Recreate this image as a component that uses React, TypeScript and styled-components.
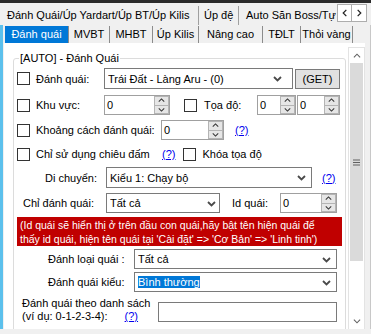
import React from 'react'
import styled, { createGlobalStyle, css } from 'styled-components'

const GlobalStyle = createGlobalStyle`
  html, body {
    margin: 0;
    padding: 0;
    background: #f0f0f0;
  }
  body {
    font-family: 'Liberation Sans', Arial, sans-serif;
    font-size: 11px;
    color: #000;
  }
`

const Window = styled.div`
  width: 371px;
  height: 334px;
  overflow: hidden;
  display: flex;
  flex-direction: column;
  background: #f0f0f0;
`

const TitleStrip = styled.div`
  height: 3px;
  flex: none;
  background: #2b2b2b;
`

const OuterBar = styled.div`
  height: 22px;
  flex: none;
  display: flex;
`

const OuterTabs = styled.div`
  flex: 1;
  display: flex;
  overflow: hidden;
  padding-left: 4px;
`

const OuterTab = styled.div<{ $w?: number; $pl: number }>`
  flex: none;
  width: ${p => (p.$w ? `${p.$w}px` : 'auto')};
  box-sizing: border-box;
  padding-left: ${p => p.$pl}px;
  padding-right: 6px;
  margin-top: 3px;
  line-height: 19px;
  white-space: nowrap;
  border-right: 1px solid #a0a0a0;
`

const ScrollArrows = styled.div`
  flex: none;
  display: flex;
  padding: 1px 4px 0 0;
`

const ArrowBox = styled.div`
  width: 15px;
  height: 18px;
  box-sizing: border-box;
  border: 1px solid #adadad;
  background: #fff;
  display: flex;
  align-items: center;
  justify-content: center;
  & + & {
    border-left: none;
  }
`

const Body = styled.div`
  flex: 1;
  display: flex;
  min-height: 0;
`

const BlueEdge = styled.div`
  width: 3px;
  flex: none;
  background: #5cc0ec;
`

const TabControl = styled.div`
  flex: 1;
  display: flex;
  flex-direction: column;
  border-left: 1px solid #f0f0f0;
`

const InnerTabs = styled.div`
  height: 18px;
  flex: none;
  display: flex;
  padding: 1px 0 0 1px;
  box-sizing: border-box;
`

const InnerTab = styled.div<{ $w: number; $active?: boolean }>`
  width: ${p => p.$w}px;
  flex: none;
  box-sizing: border-box;
  border-right: 1px solid #8c8c8c;
  text-align: center;
  line-height: 16px;
  white-space: nowrap;
  ${p =>
    p.$active &&
    css`
      background: #0078d7;
      color: #fff;
    `}
`

const Page = styled.div`
  flex: 1;
  display: flex;
  background: #fff;
  min-height: 0;
`

const PageContent = styled.div`
  flex: 1;
  overflow: hidden;
  padding: 15px 2px 0 9px;
`

const ScrollBar = styled.div`
  width: 17px;
  flex: none;
  margin-top: 4px;
  display: flex;
  flex-direction: column;
  box-sizing: border-box;
  border: 1px solid #e3e3e3;
  border-bottom: none;
  background: #fff;
`

const ScrollBtn = styled.div<{ $h: number }>`
  height: ${p => p.$h}px;
  flex: none;
  display: flex;
  align-items: center;
  justify-content: center;
`

const Thumb = styled.div`
  height: 198px;
  flex: none;
  margin: 0 1px;
  background: #dadada;
  display: flex;
  align-items: center;
  justify-content: center;
`

const Track = styled.div`
  flex: 1;
`

const RightEdge = styled.div`
  width: 6px;
  flex: none;
  box-sizing: border-box;
  border-right: 1px solid #c8c8c8;
`

const BottomStrip = styled.div`
  height: 5px;
  flex: none;
`

const Group = styled.div`
  position: relative;
  border: 1px solid #dcdcdc;
  border-radius: 3px;
  padding: 9px 0 40px 3px;
`

const Legend = styled.span`
  position: absolute;
  top: -8px;
  left: 5px;
  padding: 0 1px;
  background: #fff;
  line-height: 14px;
`

const Row = styled.div<{ $h: number; $mt?: number; $top?: boolean }>`
  display: flex;
  align-items: ${p => (p.$top ? 'flex-start' : 'center')};
  height: ${p => p.$h}px;
  margin-top: ${p => p.$mt ?? 0}px;
`

const Check = styled.span<{ $ml?: number }>`
  width: 13px;
  height: 13px;
  flex: none;
  box-sizing: border-box;
  border: 1px solid #333;
  background: #fff;
  margin-left: ${p => p.$ml ?? 0}px;
`

const Label = styled.span<{ $w?: number; $ml?: number }>`
  flex: none;
  white-space: nowrap;
  width: ${p => (p.$w ? `${p.$w}px` : 'auto')};
  margin-left: ${p => p.$ml ?? 0}px;
`

const Link = styled.span<{ $ml?: number }>`
  flex: none;
  color: #0000ee;
  text-decoration: underline;
  margin-left: ${p => p.$ml ?? 0}px;
`

const Combo = styled.div<{ $w: number; $ml?: number; $ar?: number }>`
  width: ${p => p.$w}px;
  height: 100%;
  flex: none;
  box-sizing: border-box;
  margin-left: ${p => p.$ml ?? 0}px;
  border: 1px solid #7a7a7a;
  background: #fff;
  display: flex;
  align-items: center;
  padding: 0 ${p => p.$ar ?? 5}px 0 3px;
`

const ComboText = styled.span`
  flex: 1;
  white-space: nowrap;
  overflow: hidden;
`

const Selected = styled.span`
  background: #0078d7;
  color: #fff;
`

const Numeric = styled.div<{ $w: number; $ml?: number }>`
  width: ${p => p.$w}px;
  height: 100%;
  flex: none;
  box-sizing: border-box;
  margin-left: ${p => p.$ml ?? 0}px;
  border: 1px solid #a0a0a0;
  background: #fff;
  display: flex;
`

const NumText = styled.span`
  flex: 1;
  display: flex;
  align-items: center;
  padding-left: 2px;
`

const Spinner = styled.div`
  width: 15px;
  flex: none;
  display: flex;
  flex-direction: column;
`

const SpinBtn = styled.div`
  flex: 1;
  background: #e6e6e6;
  border: 1px solid #b4b4b4;
  display: flex;
  align-items: center;
  justify-content: center;
  & + & {
    border-top: none;
  }
`

const Button = styled.div<{ $w: number; $ml?: number }>`
  width: ${p => p.$w}px;
  height: 20px;
  flex: none;
  box-sizing: border-box;
  margin-left: ${p => p.$ml ?? 0}px;
  background: #e1e1e1;
  border: 1px solid #7a7a7a;
  display: flex;
  align-items: center;
  justify-content: center;
`

const Notice = styled.div`
  margin-top: 4px;
  width: 325px;
  height: 29px;
  box-sizing: border-box;
  background: #c00000;
  color: #fff;
  padding: 1px 0 0 3px;
  font-size: 10.5px;
  line-height: 14px;
  white-space: nowrap;
  overflow: hidden;
`

const ListLabel = styled.div`
  width: 136px;
  margin-left: 5px;
  flex: none;
  line-height: 13px;
  white-space: nowrap;
`

const ListLine = styled.div`
  display: flex;
`

const TextBox = styled.div<{ $w: number }>`
  width: ${p => p.$w}px;
  height: 20px;
  margin-top: 5px;
  flex: none;
  box-sizing: border-box;
  border: 1px solid #7a7a7a;
  background: #fff;
`

type Dir = 'up' | 'down' | 'left' | 'right'

const chevronPaths: Record<Dir, string> = {
  down: 'M1 3 L4.5 6.5 L8 3',
  up: 'M1 6 L4.5 2.5 L8 6',
  left: 'M6 1 L2.5 4.5 L6 8',
  right: 'M3 1 L6.5 4.5 L3 8',
}

const Chevron = ({ dir, size = 9, color = '#4a4a4a', sw = 1.8 }: { dir: Dir; size?: number; color?: string; sw?: number }) => (
  <svg width={size} height={size} viewBox="0 0 9 9" style={{ flex: 'none' }}>
    <path d={chevronPaths[dir]} fill="none" stroke={color} strokeWidth={sw} />
  </svg>
)

const Grip = () => (
  <svg width={7} height={7} viewBox="0 0 7 7">
    <path d="M0 1 H7 M0 3.5 H7 M0 6 H7" stroke="#606060" strokeWidth={1} />
  </svg>
)

const NumBox = ({ w, ml, value = '0' }: { w: number; ml?: number; value?: string }) => (
  <Numeric $w={w} $ml={ml}>
    <NumText>{value}</NumText>
    <Spinner>
      <SpinBtn>
        <Chevron dir="up" size={7} sw={1.3} color="#333" />
      </SpinBtn>
      <SpinBtn>
        <Chevron dir="down" size={7} sw={1.3} color="#333" />
      </SpinBtn>
    </Spinner>
  </Numeric>
)

const ComboBox = ({ w, ml, ar, children }: { w: number; ml?: number; ar?: number; children: React.ReactNode }) => (
  <Combo $w={w} $ml={ml} $ar={ar}>
    <ComboText>{children}</ComboText>
    <Chevron dir="down" />
  </Combo>
)

const innerTabs: [string, number][] = [
  ['Đánh quái', 64],
  ['MVBT', 41],
  ['MHBT', 43],
  ['Úp Kilis', 46],
  ['Nâng cao', 64],
  ['TĐLT', 38],
  ['Thỏi vàng', 52],
]

export default function App() {
  return (
    <>
      <GlobalStyle />
      <Window>
        <TitleStrip />
        <OuterBar>
          <OuterTabs>
            <OuterTab $w={195} $pl={3}>Đánh Quái/Úp Yardart/Úp BT/Úp Kilis</OuterTab>
            <OuterTab $w={40} $pl={5}>Úp đệ</OuterTab>
            <OuterTab $pl={7}>Auto Săn Boss/Tự</OuterTab>
          </OuterTabs>
          <ScrollArrows>
            <ArrowBox>
              <Chevron dir="left" size={8} sw={1.4} color="#222" />
            </ArrowBox>
            <ArrowBox>
              <Chevron dir="right" size={8} sw={1.4} color="#222" />
            </ArrowBox>
          </ScrollArrows>
        </OuterBar>

        <Body>
          <BlueEdge />
          <TabControl>
            <InnerTabs>
              {innerTabs.map(([name, w], i) => (
                <InnerTab key={name} $w={w} $active={i === 0}>
                  {name}
                </InnerTab>
              ))}
            </InnerTabs>
            <Page>
              <PageContent>
                <Group>
                  <Legend>[AUTO] - Đánh Quái</Legend>

                  <Row $h={21}>
                    <Check />
                    <Label $ml={6} $w={62}>Đánh quái:</Label>
                    <ComboBox w={189} ml={6} ar={10}>Trái Đất - Làng Aru - (0)</ComboBox>
                    <Button $w={45} $ml={2}>(GET)</Button>
                  </Row>

                  <Row $h={20} $mt={6}>
                    <Check />
                    <Label $ml={6} $w={62}>Khu vực:</Label>
                    <NumBox w={66} ml={6} />
                    <Check $ml={14} />
                    <Label $ml={7} $w={53}>Tọa độ:</Label>
                    <NumBox w={39} />
                    <NumBox w={43} ml={1} />
                  </Row>

                  <Row $h={20} $mt={5}>
                    <Check />
                    <Label $ml={6} $w={119}>Khoảng cách đánh quái:</Label>
                    <NumBox w={63} ml={6} />
                    <Link $ml={11}>(?)</Link>
                  </Row>

                  <Row $h={20} $mt={4}>
                    <Check />
                    <Label $ml={6} $w={120}>Chỉ sử dụng chiêu đấm</Label>
                    <Link $ml={6}>(?)</Link>
                    <Check $ml={8} />
                    <Label $ml={6}>Khóa tọa độ</Label>
                  </Row>

                  <Row $h={21} $mt={3}>
                    <Label $ml={28} $w={61}>Di chuyển:</Label>
                    <ComboBox w={206}>Kiểu 1: Chạy bộ</ComboBox>
                    <Link $ml={10}>(?)</Link>
                  </Row>

                  <Row $h={20} $mt={5}>
                    <Label $ml={6} $w={83}>Chỉ đánh quái:</Label>
                    <ComboBox w={114} ar={3}>Tất cả</ComboBox>
                    <Label $ml={12} $w={48}>Id quái:</Label>
                    <NumBox w={57} />
                  </Row>

                  <Notice>
                    (Id quái sẽ hiển thị ở trên đầu con quái,hãy bật tên hiện quái để
                    <br />
                    thấy id quái, hiện tên quái tại 'Cài đặt' =&gt; 'Cơ Bản' =&gt; 'Linh tinh')
                  </Notice>

                  <Row $h={20} $mt={3}>
                    <Label $ml={31} $w={86}>Đánh loại quái :</Label>
                    <ComboBox w={203}>Tất cả</ComboBox>
                  </Row>

                  <Row $h={20} $mt={3}>
                    <Label $ml={31} $w={86}>Đánh quái kiểu:</Label>
                    <ComboBox w={203}>
                      <Selected>Bình thường</Selected>
                    </ComboBox>
                  </Row>

                  <Row $h={28} $mt={5} $top>
                    <ListLabel>
                      <ListLine>Đánh quái theo danh sách</ListLine>
                      <ListLine>
                        (ví dụ: 0-1-2-3-4):
                        <Link $ml={17}>(?)</Link>
                      </ListLine>
                    </ListLabel>
                    <TextBox $w={179} />
                  </Row>
                </Group>
              </PageContent>
              <ScrollBar>
                <ScrollBtn $h={15}>
                  <Chevron dir="up" size={8} sw={1.2} color="#606060" />
                </ScrollBtn>
                <Thumb>
                  <Grip />
                </Thumb>
                <Track />
                <ScrollBtn $h={16}>
                  <Chevron dir="down" size={8} sw={1.2} color="#606060" />
                </ScrollBtn>
              </ScrollBar>
            </Page>
          </TabControl>
          <RightEdge />
        </Body>
        <BottomStrip />
      </Window>
    </>
  )
}
